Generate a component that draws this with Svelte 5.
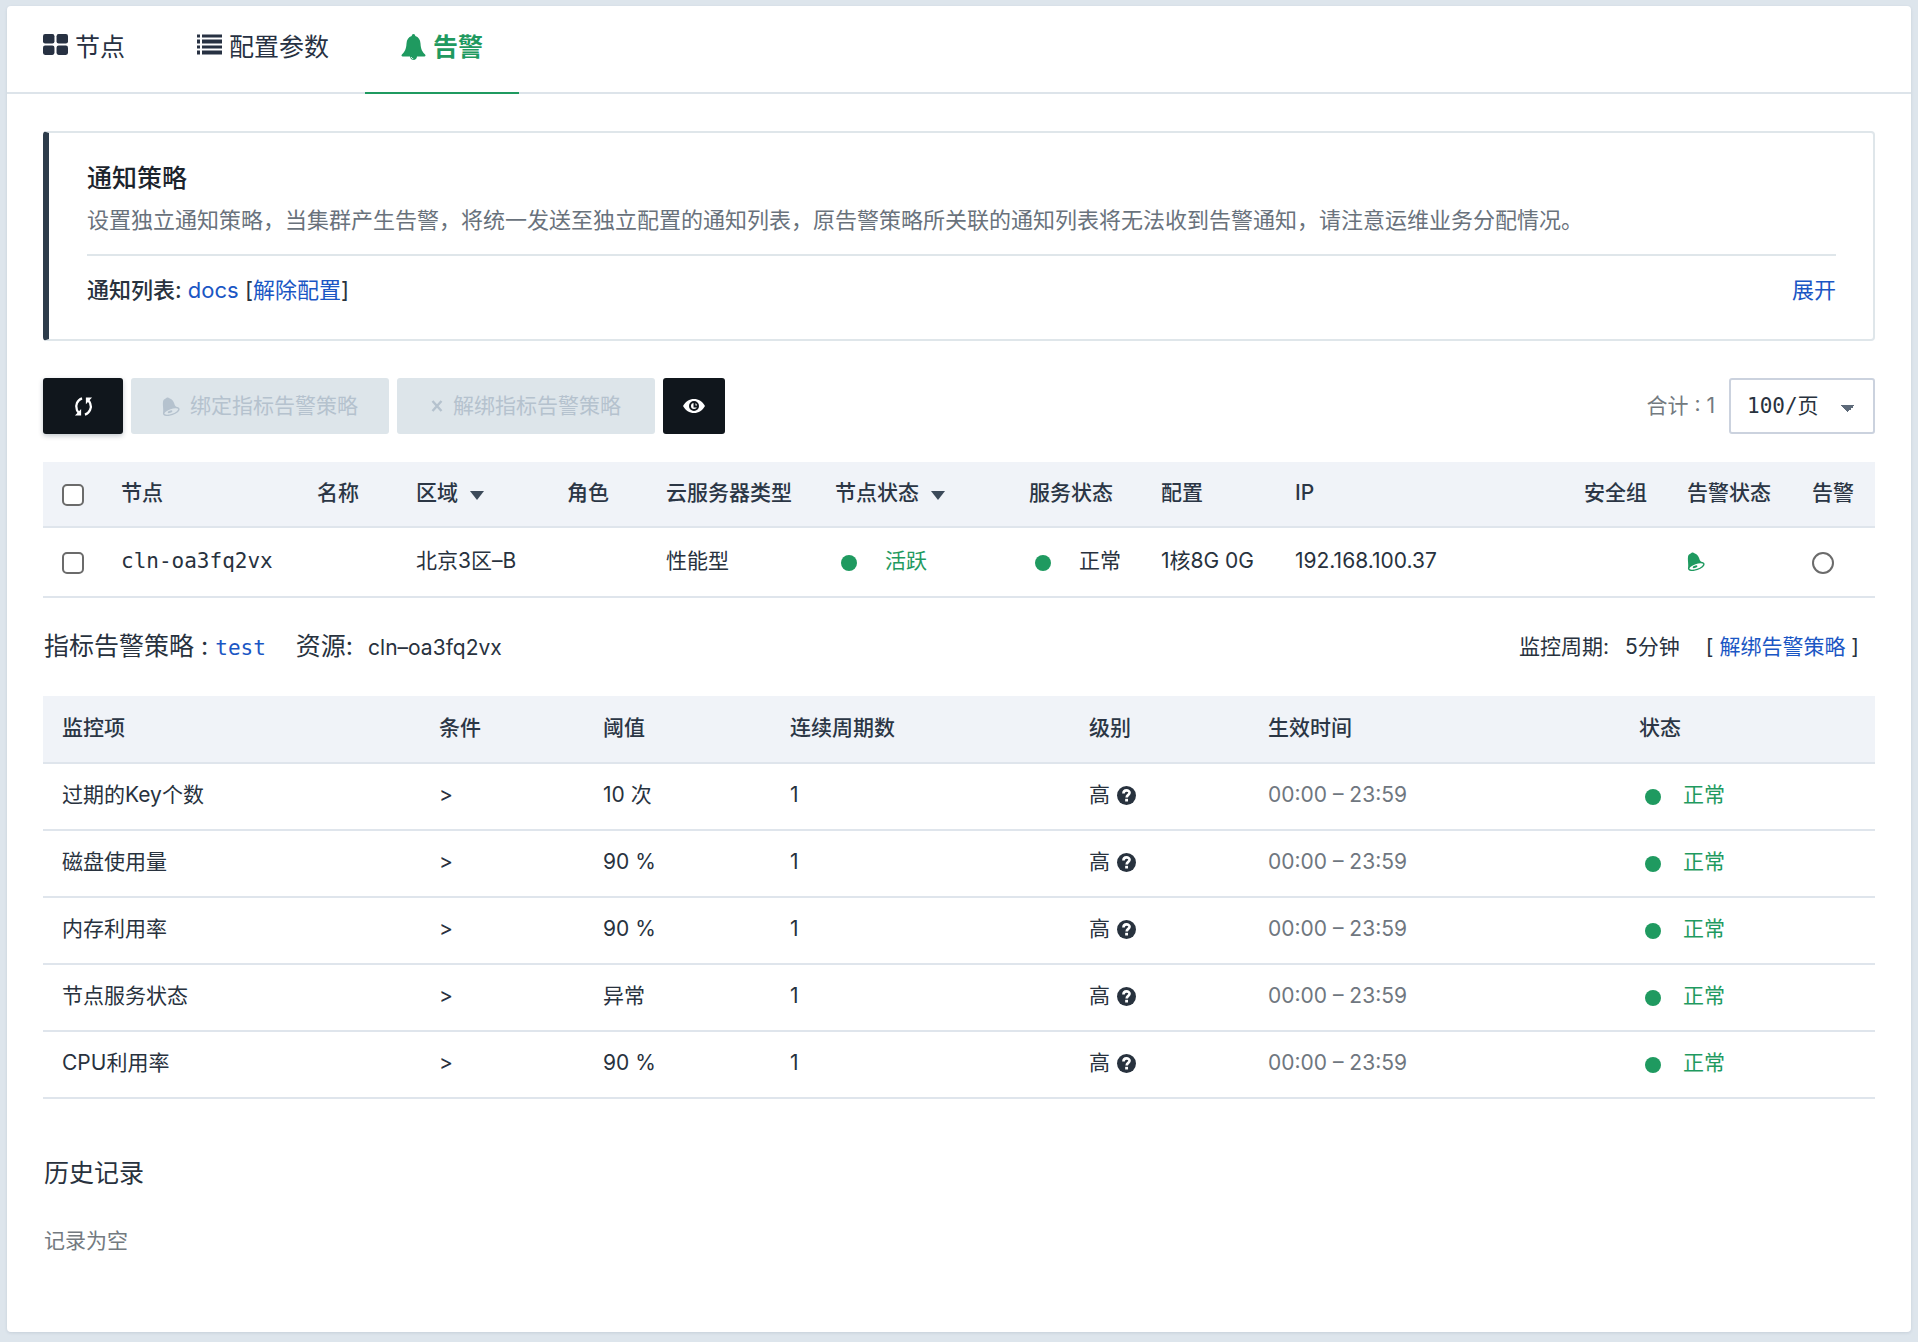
<script lang="ts">
	interface Column {
		label: string;
		width: number;
		sortable?: boolean;
	}

	const nodeColumns: Column[] = [
		{ label: '节点', width: 196 },
		{ label: '名称', width: 99 },
		{ label: '区域', width: 151, sortable: true },
		{ label: '角色', width: 99 },
		{ label: '云服务器类型', width: 169 },
		{ label: '节点状态', width: 194, sortable: true },
		{ label: '服务状态', width: 132 },
		{ label: '配置', width: 134 },
		{ label: 'IP', width: 289 },
		{ label: '安全组', width: 103 },
		{ label: '告警状态', width: 125 },
		{ label: '告警', width: 82 }
	];

	const ruleColumns: Column[] = [
		{ label: '监控项', width: 377 },
		{ label: '条件', width: 164 },
		{ label: '阈值', width: 187 },
		{ label: '连续周期数', width: 299 },
		{ label: '级别', width: 179 },
		{ label: '生效时间', width: 371 },
		{ label: '状态', width: 255 }
	];

	const rules = [
		{ name: '过期的Key个数', threshold: '10 次' },
		{ name: '磁盘使用量', threshold: '90 %' },
		{ name: '内存利用率', threshold: '90 %' },
		{ name: '节点服务状态', threshold: '异常' },
		{ name: 'CPU利用率', threshold: '90 %' }
	];
</script>

{#snippet tiltedBell()}
	<svg class="bell" viewBox="0 0 19 20" aria-hidden="true">
		<path fill="currentColor" d="M1 18C2 13 0 7 1.500 3.500 2.200 1.800 3.800 1.800 4.600.9 5.600.1 7 .3 7.800 1.300 11 2 12.600 5 13.500 8.500c.7 2 3 2.500 4.300 4L10 17Z" />
		<ellipse class="mouth" cx="9.800" cy="15.200" rx="8.400" ry="3.300" transform="rotate(-19 9.800 15.200)" />
		<ellipse cx="8.500" cy="15.500" rx="2.600" ry="1.200" transform="rotate(-19 8.500 15.500)" fill="currentColor" />
	</svg>
{/snippet}

<main class="panel">
	<nav class="tabs">
		<a class="tab" href="#nodes">
			<svg viewBox="0 0 24 20" aria-hidden="true">
				<rect x="0" y="0" width="11" height="9" rx="2" />
				<rect x="13" y="0" width="11" height="9" rx="2" />
				<rect x="0" y="11" width="11" height="9" rx="2" />
				<rect x="13" y="11" width="11" height="9" rx="2" />
			</svg>
			节点
		</a>
		<a class="tab" href="#params">
			<svg viewBox="0 0 25 20" aria-hidden="true">
				<path d="M0 0h3v3H0zM0 5h3v4H0zM0 11h3v3H0zM0 16h3v4H0zM5 0h20v3H5zM5 5h20v4H5zM5 11h20v3H5zM5 16h20v4H5z" />
			</svg>
			配置参数
		</a>
		<a class="tab active" href="#alarms" aria-current="page">
			<svg viewBox="0 0 24 26" aria-hidden="true">
				<path d="M12 0c1.100 0 1.700.8 1.800 1.900C17 2.900 18.800 5.500 19 9.500c.3 5.500 1.800 8.500 4.600 11 .8.8.4 2-.8 2h-7.300c-.2 2-1.600 3.500-3.500 3.500s-3.300-1.500-3.500-3.500H1.200c-1.200 0-1.600-1.200-.8-2C3.200 18 4.700 15 5 9.500 5.200 5.500 7 2.900 10.200 1.900 10.300.8 10.900 0 12 0Z" />
				<path d="M9.800 23c.2 1.100 1 1.800 2 1.900" fill="none" stroke="#fff" stroke-width="1" />
			</svg>
			告警
		</a>
	</nav>

	<div class="content">
		<section class="notice">
			<h2>通知策略</h2>
			<p>设置独立通知策略，当集群产生告警，将统一发送至独立配置的通知列表，原告警策略所关联的通知列表将无法收到告警通知，请注意运维业务分配情况。</p>
			<div class="notice-list">
				<span><strong>通知列表:</strong> <a href="#docs">docs</a> [<a href="#unset">解除配置</a>]</span>
				<a href="#expand">展开</a>
			</div>
		</section>

		<div class="toolbar">
			<button class="dark refresh" aria-label="刷新">
				<svg viewBox="0 0 20 20" aria-hidden="true">
					<path fill="none" stroke="currentColor" stroke-width="2.400" d="M8.500 1.500C3.500 3 1 9 3 13.500c.5 1.200 1.200 2.200 2 3M11.500 18.500c5-1.500 7.500-7.500 5.500-12-.5-1.200-1.200-2.200-2-3" />
					<path fill="currentColor" d="M7.500 12.500V19.500H1zM12.500 7.500V.5H19z" />
				</svg>
			</button>
			<button class="muted" disabled>{@render tiltedBell()}绑定指标告警策略</button>
			<button class="muted" disabled>
				<svg class="cross" viewBox="0 0 12 12" aria-hidden="true">
					<path fill="none" stroke="currentColor" stroke-width="2.400" d="M1.500 1l9 10M10.500 1l-9 10" />
				</svg>
				解绑指标告警策略
			</button>
			<button class="dark eye" aria-label="显示列">
				<svg viewBox="0 0 22 14" aria-hidden="true">
					<path fill="currentColor" d="M0 7C2.500 2.500 6.500 0 11 0s8.500 2.500 11 7c-2.500 4.500-6.500 7-11 7S2.500 11.500 0 7Z" />
					<circle cx="11" cy="7" r="4" fill="none" stroke="#10161c" stroke-width="2" />
					<path d="M11.500 4v3.500H15" fill="none" stroke="#10161c" stroke-width="2" />
				</svg>
			</button>
			<label class="total" for="page-size">合计 : 1</label>
			<select id="page-size">
				<option>100/页</option>
			</select>
		</div>

		<table>
			<colgroup>
				<col style="width: 59px" />
				{#each nodeColumns as column}
					<col style="width: {column.width}px" />
				{/each}
			</colgroup>
			<thead>
				<tr>
					<th><input type="checkbox" aria-label="全选" /></th>
					{#each nodeColumns as column}
						<th>
							{column.label}
							{#if column.sortable}<span class="caret"></span>{/if}
						</th>
					{/each}
				</tr>
			</thead>
			<tbody>
				<tr>
					<td><input type="checkbox" aria-label="cln-oa3fq2vx" /></td>
					<td class="mono">cln-oa3fq2vx</td>
					<td></td>
					<td>北京3区–B</td>
					<td></td>
					<td>性能型</td>
					<td><span class="status wide green">活跃</span></td>
					<td><span class="status wide">正常</span></td>
					<td>1核8G 0G</td>
					<td>192.168.100.37</td>
					<td></td>
					<td class="green">{@render tiltedBell()}</td>
					<td><input type="radio" name="alarm" aria-label="告警" /></td>
				</tr>
			</tbody>
		</table>

		<div class="policy">
			<div class="policy-name">
				<span>指标告警策略 : <a class="mono" href="#test">test</a></span>
				<span>资源: <small>cln–oa3fq2vx</small></span>
			</div>
			<div class="policy-cycle">
				<span>监控周期:</span>
				<span>5分钟</span>
				<span class="unbind">[ <a href="#unbind">解绑告警策略</a> ]</span>
			</div>
		</div>

		<table class="rules">
			<colgroup>
				{#each ruleColumns as column}
					<col style="width: {column.width}px" />
				{/each}
			</colgroup>
			<thead>
				<tr>
					{#each ruleColumns as column}
						<th>{column.label}</th>
					{/each}
				</tr>
			</thead>
			<tbody>
				{#each rules as rule}
					<tr>
						<td>{rule.name}</td>
						<td>&gt;</td>
						<td>{rule.threshold}</td>
						<td>1</td>
						<td>
							<span class="level">
								高
								<svg viewBox="0 0 20 20" aria-hidden="true">
									<circle cx="10" cy="10" r="10" fill="currentColor" />
									<path fill="none" stroke="#fff" stroke-width="2.800" d="M6.800 7.800c0-4.200 6.400-4 6.400-.6 0 2.200-3 2.200-3 4.800" />
									<rect x="8.600" y="13.500" width="3" height="2.800" fill="#fff" />
								</svg>
							</span>
						</td>
						<td class="grey">00:00 – 23:59</td>
						<td><span class="status green">正常</span></td>
					</tr>
				{/each}
			</tbody>
		</table>

		<section class="history">
			<h3>历史记录</h3>
			<p>记录为空</p>
		</section>
	</div>
</main>

<style>
	:global(body) {
		margin: 0;
		padding: 6px 7px 10px;
		background: #dde5ec;
	}

	.panel {
		min-height: calc(100vh - 16px);
		background: #fff;
		border-radius: 4px;
		box-shadow: 0 1px 3px rgba(40, 60, 90, 0.12);
		color: #28323e;
		font: 21px/32px Inter, 'Noto Sans CJK SC', sans-serif;
	}

	a {
		color: #1a56c4;
		text-decoration: none;
	}

	.mono {
		font-family: 'DejaVu Sans Mono', 'Noto Sans CJK SC', monospace;
		font-size: 21px;
	}

	.green {
		color: #1f9a60;
	}

	.grey {
		color: #6f7780;
	}

	.tabs {
		display: flex;
		border-bottom: 2px solid #dde4ea;
	}

	.tab {
		display: flex;
		gap: 7px;
		height: 86px;
		padding: 0 36px;
		margin-bottom: -2px;
		border-bottom: 2px solid transparent;
		color: #273142;
		font-size: 25px;
		line-height: 82px;
	}

	.tab svg {
		width: 25px;
		height: 21px;
		margin-top: 28px;
		fill: currentColor;
	}

	.tab.active {
		color: #1f9a60;
		border-color: #1f9a60;
		font-weight: bold;
	}

	.tab.active svg {
		height: 26px;
	}

	.content {
		padding: 37px 36px 72px;
	}

	.notice {
		padding: 27px 37px 33px 38px;
		border: 2px solid #dfe6ea;
		border-left: 6px solid #2d3c4b;
		border-radius: 4px;
		font-size: 22px;
	}

	.notice h2 {
		margin: 0;
		color: #1c242d;
		font-size: 25px;
		line-height: 36px;
		font-weight: 500;
	}

	.notice strong {
		font-weight: 500;
	}

	.notice p {
		margin: 8px 0 18px;
		color: #69727c;
	}

	.notice-list {
		display: flex;
		justify-content: space-between;
		padding-top: 18px;
		border-top: 2px solid #dfe6ea;
	}

	.toolbar {
		display: flex;
		align-items: center;
		gap: 8px;
		margin: 37px 0 28px;
	}

	button {
		display: flex;
		align-items: center;
		justify-content: center;
		gap: 10px;
		height: 56px;
		padding: 0;
		border: 0;
		border-radius: 3px;
		font: inherit;
	}

	.dark {
		background: #10161c;
		color: #fff;
	}

	.refresh {
		width: 80px;
		box-shadow: 0 2px 5px rgba(20, 40, 60, 0.25);
	}

	.refresh svg {
		width: 19px;
		height: 19px;
	}

	.eye {
		width: 62px;
	}

	.eye svg {
		width: 22px;
		height: 14px;
	}

	.muted {
		width: 258px;
		background: #dde5ea;
		color: #b5c2ce;
	}

	.bell {
		display: block;
		width: 18px;
		height: 19px;
	}

	.mouth {
		fill: #fff;
		stroke: currentColor;
		stroke-width: 1.5;
	}

	.muted .mouth {
		fill: #dde5ea;
	}

	.cross {
		width: 12px;
		height: 12px;
	}

	.total {
		margin-left: auto;
		color: #737a80;
	}

	select {
		appearance: none;
		width: 146px;
		height: 56px;
		padding: 0 16px;
		margin-left: 6px;
		border: 2px solid #cbd2de;
		border-radius: 3px;
		background: #fff;
		background-image: linear-gradient(to bottom right, #5d6a79 50%, transparent 50%), linear-gradient(to bottom left, #5d6a79 50%, transparent 50%);
		background-size: 7px 7px;
		background-position: right 18px top 25px, right 25px top 25px;
		background-repeat: no-repeat;
		color: #28323e;
		font: 21px 'DejaVu Sans Mono', 'Noto Sans CJK SC', monospace;
	}

	table {
		width: 100%;
		table-layout: fixed;
		border-collapse: separate;
		border-spacing: 0;
	}

	th,
	td {
		box-sizing: border-box;
		padding: 0 0 2px 19px;
		border-bottom: 2px solid #dfe5ec;
		text-align: left;
		white-space: nowrap;
	}

	th {
		height: 66px;
		background: #f0f3f8;
		color: #2b3645;
		font-weight: 500;
	}

	td {
		height: 70px;
	}

	.rules th {
		height: 68px;
	}

	.rules td {
		height: 67px;
		padding-bottom: 3px;
	}

	input {
		display: block;
		appearance: none;
		box-sizing: border-box;
		width: 22px;
		height: 22px;
		margin: 4px 0 0;
		border: 2px solid #6b6b6b;
		border-radius: 5px;
		background: #fff;
	}

	input[type='radio'] {
		border-radius: 50%;
	}

	.caret {
		display: inline-block;
		margin-left: 6px;
		border: 7px solid transparent;
		border-top: 9px solid #3c4a5a;
		border-bottom: 0;
	}

	.status {
		display: flex;
		align-items: center;
		gap: 22px;
		padding-left: 6px;
	}

	.status::before {
		content: '';
		width: 16px;
		height: 16px;
		margin-top: 3px;
		border-radius: 50%;
		background: #1f9a60;
	}

	.status.wide {
		gap: 28px;
	}

	.level {
		display: flex;
		align-items: center;
		gap: 7px;
	}

	.level svg {
		width: 19px;
		height: 19px;
	}

	.policy {
		display: flex;
		justify-content: space-between;
		align-items: center;
		padding: 0 16px 0 1px;
		height: 98px;
	}

	.policy-name {
		display: flex;
		gap: 30px;
		font-size: 25px;
	}

	.policy-name small {
		margin-left: 8px;
		font-size: 21px;
	}

	.policy-cycle {
		display: flex;
		gap: 16px;
	}

	.unbind {
		margin-left: 10px;
	}

	.history {
		padding: 56px 1px 0;
	}

	.history h3 {
		margin: 0 0 34px;
		font-size: 25px;
		line-height: 36px;
		font-weight: 400;
	}

	.history p {
		margin: 0;
		color: #737a80;
	}
</style>
